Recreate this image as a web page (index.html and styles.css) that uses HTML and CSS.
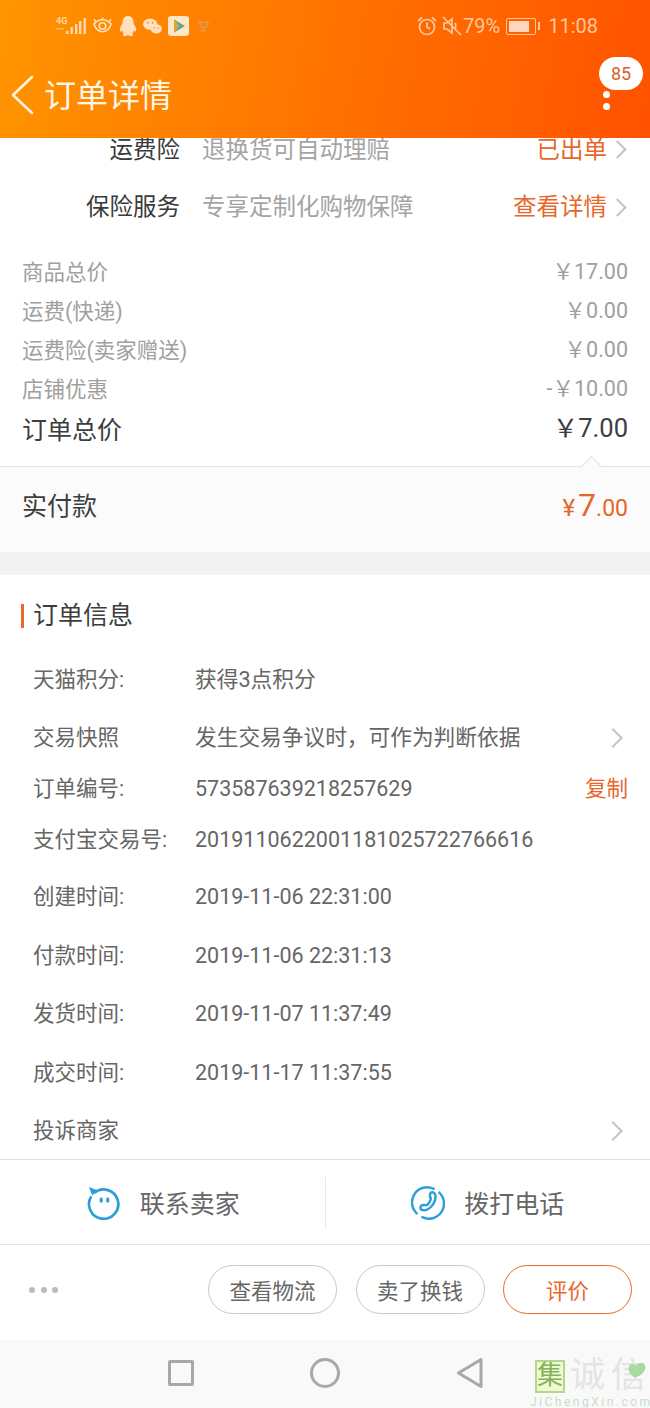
FILE: index.html
```html
<!DOCTYPE html>
<html lang="zh-CN">
<head>
    <meta charset="UTF-8">
    <meta name="viewport" content="width=device-width, initial-scale=1.0">
    <title>订单详情</title>
    <link rel="stylesheet" href="styles.css">
</head>
<body>
<div class="screen">
    <header class="top">
        <div class="status">
            <div class="status-left">
                <svg class="ic-signal" width="30" height="20" viewBox="0 0 30 20">
                    <text x="0" y="8" class="net">4G</text>
                    <rect x="0" y="12" width="8" height="1.500" opacity=".5"/>
                    <rect x="10" y="15" width="2.400" height="3"/><rect x="14.500" y="11" width="2.400" height="7"/><rect x="19" y="8" width="2.400" height="10"/><rect x="23" y="5" width="2.400" height="13"/><rect x="27.500" y="2" width="2.400" height="16"/>
                </svg>
                <svg width="21" height="18" viewBox="0 0 22 18" fill="none" stroke="#ffe2bd" stroke-width="1.700">
                    <path d="M2 7c5-6 13-6 18 0-2 6-5 8-9 8s-7-2-9-8z"/><circle cx="11" cy="9" r="3.400"/><path d="M2 2l2 2M20 2l-2 2M11 0v2"/>
                </svg>
                <svg width="18" height="21" viewBox="0 0 18 21" fill="#ffe2bd">
                    <path d="M9 0c4 0 5.500 3 5.500 6.500 0 1 .5 1.500 1.500 3.500 1.500 3 1.500 5.500.5 5.500-.5 0-1-.5-1.500-1.500-.5 2-1 2.800-2 3.500 1.500.5 1.500 2.500-1 2.500-1.500 0-2.500-.5-3-1-.5.5-1.500 1-3 1-2.500 0-2.500-2-1-2.500-1-.7-1.500-1.500-2-3.500-.5 1-1 1.500-1.500 1.500-1 0-1-2.500.5-5.500 1-2 1.500-2.500 1.500-3.500C3.500 3 5 0 9 0z"/>
                </svg>
                <svg width="19" height="17" viewBox="0 0 20 18" fill="#ffe2bd">
                    <ellipse cx="7.500" cy="6.500" rx="7.500" ry="6"/><ellipse cx="14" cy="11.500" rx="6" ry="5"/>
                    <circle cx="5" cy="5" r="1" fill="#ff8c00"/><circle cx="10" cy="5" r="1" fill="#ff8c00"/><circle cx="12" cy="10.500" r=".8" fill="#ff8c00"/><circle cx="16" cy="10.500" r=".8" fill="#ff8c00"/>
                </svg>
                <svg width="21" height="20" viewBox="0 0 21 20">
                    <rect width="21" height="20" rx="3" fill="#ffe7c4"/><path d="M6 3.500l11 6.500-11 6.500z" fill="#4fa9a0"/><path d="M6 3.500l5.500 6.500L6 16.500z" fill="#e9a52e"/>
                </svg>
                <svg class="ic-tiny" width="15" height="11" viewBox="0 0 13 10" fill="none" stroke="#d9a25c" stroke-width="1.200">
                    <path d="M1 1h11M3 1c0 4 2 5 3.500 5S10 5 10 1M6.500 6v3M4 9h5"/>
                </svg>
            </div>
            <div class="status-right">
                <svg width="20" height="20" viewBox="0 0 20 20" fill="none" stroke="#ffc89b" stroke-width="1.700">
                    <circle cx="10" cy="11" r="7.500"/><path d="M10 6.500V11l3 2M1 5l4-3.500M19 5l-4-3.500"/>
                </svg>
                <svg width="20" height="20" viewBox="0 0 20 20" fill="none" stroke="#ffc89b" stroke-width="1.700">
                    <path d="M2 7v6h3l5 4V3L5 7zM13 7c1 1 1 5 0 6M1 1l18 18"/>
                </svg>
                <span class="status-text pct">79%</span>
                <div class="battery"><span class="battery-fill"></span></div>
                <span class="battery-tip"></span>
                <span class="status-text clock">11:08</span>
            </div>
        </div>
        <div class="nav">
            <svg class="back" width="24" height="40" viewBox="0 0 24 40" fill="none" stroke="#fff4e0" stroke-width="2.600" stroke-linecap="round" stroke-linejoin="round">
                <path d="M21 2L2 20l19 18"/>
            </svg>
            <h1 class="nav-title">订单详情</h1>
            <div class="more"><i></i><i></i></div>
            <span class="badge">85</span>
        </div>
    </header>

    <main class="content">
        <div class="service-wrap">
            <div class="service">
                <span class="service-name">运费险</span>
                <span class="service-desc">退换货可自动理赔</span>
                <span class="service-state">已出单</span>
                <span class="chev chev-sm"></span>
            </div>
            <div class="service">
                <span class="service-name">保险服务</span>
                <span class="service-desc">专享定制化购物保障</span>
                <span class="service-state">查看详情</span>
                <span class="chev chev-sm"></span>
            </div>
        </div>

        <section class="prices">
            <div class="price-row"><span>商品总价</span><span class="amount">￥17.00</span></div>
            <div class="price-row"><span>运费(快递)</span><span class="amount">￥0.00</span></div>
            <div class="price-row"><span>运费险(卖家赠送)</span><span class="amount">￥0.00</span></div>
            <div class="price-row"><span>店铺优惠</span><span class="amount">-￥10.00</span></div>
            <div class="price-row total"><span>订单总价</span><span class="amount">￥7.00</span></div>
        </section>

        <section class="paid">
            <span class="notch"></span>
            <span class="paid-label">实付款</span>
            <span class="paid-sum"><small class="yen">¥</small><b>7</b><small>.00</small></span>
        </section>

        <section class="info">
            <h2 class="info-title">订单信息</h2>
            <div class="info-row r1"><span class="k">天猫积分:</span><span class="v">获得3点积分</span></div>
            <div class="info-row r2"><span class="k">交易快照</span><span class="v">发生交易争议时，可作为判断依据</span><span class="chev"></span></div>
            <div class="info-row r3"><span class="k">订单编号:</span><span class="v">573587639218257629</span><span class="copy">复制</span></div>
            <div class="info-row r4"><span class="k">支付宝交易号:</span><span class="v">2019110622001181025722766616</span></div>
            <div class="info-row"><span class="k">创建时间:</span><span class="v">2019-11-06 22:31:00</span></div>
            <div class="info-row"><span class="k">付款时间:</span><span class="v">2019-11-06 22:31:13</span></div>
            <div class="info-row"><span class="k">发货时间:</span><span class="v">2019-11-07 11:37:49</span></div>
            <div class="info-row"><span class="k">成交时间:</span><span class="v">2019-11-17 11:37:55</span></div>
            <div class="info-row"><span class="k">投诉商家</span><span class="v"></span><span class="chev"></span></div>
        </section>
    </main>

    <section class="contact">
        <div class="contact-item">
            <svg width="34" height="34" viewBox="0 0 36 36" fill="none" stroke="#2a9fd8" stroke-width="2.800">
                <path d="M7.500 7.500A15.500 15.500 0 1 1 4.500 11"/>
                <path d="M2 1l9 3.500-5.500 5.500z" fill="#2a9fd8" stroke="none"/>
                <ellipse cx="15" cy="15" rx="1.700" ry="3" fill="#2a9fd8" stroke="none"/>
                <ellipse cx="22" cy="15" rx="1.700" ry="3" fill="#2a9fd8" stroke="none"/>
            </svg>
            <span>联系卖家</span>
        </div>
        <div class="contact-item">
            <svg width="34" height="34" viewBox="0 0 36 36" fill="none" stroke="#2a9fd8" stroke-width="2.600" stroke-linecap="round">
                <path d="M6 29A16 16 0 0 1 24 3M30 7a16 16 0 0 1-18 26"/>
                <path d="M21 7c3-1 5 1 5 4 0 6-4 12-9 14-3 1-7 1-7-2 0-2 2-3 4-3 1 0 2 1 3 0 2-1 4-5 4-7 0-1-1-1-1-2 0-2 0-3 1-4z"/>
            </svg>
            <span>拨打电话</span>
        </div>
    </section>

    <section class="actions">
        <div class="dots"><i></i><i></i><i></i></div>
        <button class="btn">查看物流</button>
        <button class="btn">卖了换钱</button>
        <button class="btn btn-main">评价</button>
    </section>

    <footer class="sysnav">
        <span class="sys-square"></span>
        <span class="sys-circle"></span>
        <svg width="28" height="32" viewBox="0 0 28 32" fill="none" stroke="#a8a8a8" stroke-width="3" stroke-linejoin="round">
            <path d="M25 2.500v27L2.500 16z"/>
        </svg>
    </footer>

    <div class="mark">
        <div class="mark-top">
            <span class="mark-box">集</span>
            <span class="mark-cn">诚信</span>
            <svg class="mark-leaf" width="24" height="30" viewBox="0 0 24 30">
                <path d="M10 18C3 13 2 8 5 5c2-2 5-1 6 1 1-3 5-4 8-2 3 3 2 9-9 14z" fill="#a5dca0"/>
                <path d="M10 18C7 22 4 26 1 28" fill="none" stroke="#dfe8df" stroke-width="1.500"/>
            </svg>
        </div>
        <div class="mark-url">JiChengXin.com</div>
    </div>
</div>
</body>
</html>
```

FILE: styles.css
```css
* {
    box-sizing: border-box;
}

html, body {
    margin: 0;
    padding: 0;
}

body {
    font-family: Roboto, "Noto Sans CJK SC", sans-serif;
    color: #666;
    background: #fff;
}

.screen {
    position: relative;
    width: 650px;
    height: 1408px;
    overflow: hidden;
    display: flex;
    flex-direction: column;
    line-height: 32px;
}

/* header */
.top {
    position: relative;
    z-index: 1;
    height: 138px;
    flex: none;
    background: linear-gradient(100deg, #ff9400 0%, #ff7300 50%, #ff5200 100%);
}

.status {
    height: 52px;
    display: flex;
    justify-content: space-between;
    align-items: center;
    padding: 0 52px 0 56px;
}

.status-left {
    display: flex;
    align-items: center;
    gap: 6px;
}

.ic-signal {
    fill: #ffd9a8;
}

.ic-tiny {
    margin-left: 1px;
}

.net {
    font-size: 9px;
    font-weight: 700;
}

.status-right {
    display: flex;
    align-items: center;
}

.status-right svg {
    margin-right: 5px;
}

.status-right svg + svg {
    margin-right: 1px;
}

.status-text {
    color: #ffc89b;
    font-size: 20px;
}

.pct {
    margin-right: 6px;
}

.battery {
    width: 30px;
    height: 17px;
    border: 1px solid #ffc89b;
    border-radius: 2px;
    padding: 2px;
}

.battery-fill {
    display: block;
    width: 20px;
    height: 11px;
    background: #ffd6bd;
}

.battery-tip {
    width: 2px;
    height: 8px;
    margin: 0 8px 0 2px;
    background: #ffc89b;
}

.nav {
    position: relative;
    height: 86px;
    display: flex;
    align-items: center;
    padding: 0 0 0 11px;
}

.nav-title {
    margin: 2px 0 0 9px;
    font-size: 32px;
    font-weight: 400;
    color: #fff6e6;
    line-height: 1;
}

.more {
    position: absolute;
    left: 603px;
    top: 39px;
    display: flex;
    flex-direction: column;
    gap: 5px;
}

.more i {
    width: 7px;
    height: 7px;
    border-radius: 50%;
    background: #fff;
}

.badge {
    position: absolute;
    left: 599px;
    top: 5px;
    width: 44px;
    height: 33px;
    border-radius: 17px;
    background: #fff;
    color: #d8602c;
    font-size: 18px;
    line-height: 33px;
    text-align: center;
}

/* order scroll area */
.content {
    flex: none;
    height: 1022px;
    overflow: hidden;
    border-bottom: 1px solid #dedede;
}

.service-wrap {
    margin-top: -17px;
}

.service {
    height: 57.500px;
    display: flex;
    align-items: center;
    padding-right: 24px;
    font-size: 23.500px;
}

.service-name {
    width: 180px;
    text-align: right;
    color: #3a3a3a;
}

.service-desc {
    flex: 1;
    margin-left: 22px;
    color: #a4a4a4;
}

.service-state {
    color: #e8672a;
}

.chev {
    width: 13px;
    height: 13px;
    margin-left: auto;
    margin-right: 5px;
    border-top: 2px solid #c4c4c4;
    border-right: 2px solid #c4c4c4;
    transform: rotate(45deg);
}

.chev-sm {
    margin-left: 4px;
    margin-right: 2px;
}

.prices {
    margin-top: 18px;
    padding: 0 22px;
}

.price-row {
    height: 38.800px;
    display: flex;
    justify-content: space-between;
    align-items: center;
    font-size: 21.500px;
    color: #a0a0a0;
}

.amount {
    margin-bottom: 2px;
}

.price-row.total {
    height: 43px;
    font-size: 25.500px;
    color: #3d3d3d;
}

.price-row.total span:first-child {
    font-size: 25px;
}

.price-row.total .amount {
    margin-bottom: 5px;
}

.paid {
    position: relative;
    height: 86px;
    margin-top: 14px;
    padding: 0 22px 5px;
    display: flex;
    justify-content: space-between;
    align-items: center;
    background: #fbfbfb;
    border-top: 1px solid #e4e4e4;
}

.notch {
    position: absolute;
    left: 584px;
    top: -8px;
    width: 15px;
    height: 15px;
    background: #fbfbfb;
    border-top: 1px solid #e0e0e0;
    border-left: 1px solid #e0e0e0;
    transform: rotate(45deg);
}

.paid-label {
    font-size: 25px;
    color: #3d3d3d;
}

.paid-sum {
    color: #e4662a;
    display: flex;
    align-items: baseline;
}

.paid-sum small {
    font-size: 23px;
}

.paid-sum .yen {
    font-size: 24px;
    margin-right: 3px;
}

.paid-sum b {
    font-size: 32px;
    font-weight: 400;
}

.info {
    margin-top: 23px;
    position: relative;
    padding-top: 22px;
}

.info::before {
    content: "";
    position: absolute;
    left: -1px;
    right: -1px;
    top: -23px;
    height: 23px;
    background: #f2f2f2;
}

.info-title {
    margin: 7px 0 0 21px;
    padding-left: 9px;
    border-left: 3px solid #e8672a;
    font-size: 25px;
    font-weight: 400;
    line-height: 24px;
    color: #3d3d3d;
}

.info-row {
    height: 58.500px;
    display: flex;
    align-items: center;
    padding: 0 22px 0 33px;
    font-size: 21.500px;
    color: #666;
}

.info-row.r1 {
    height: 57.500px;
    margin-top: 23.500px;
}

.info-row.r2 {
    height: 58px;
}

.info-row.r3 {
    height: 44px;
}

.info-row.r4 {
    height: 57px;
}

.r1 .v, .r2 .v {
    font-size: 21.700px;
}

.k {
    width: 162px;
    flex: none;
}

.v {
    flex: 1;
    white-space: nowrap;
}

.info-row .chev {
    margin-right: 8px;
    width: 14px;
    height: 14px;
}

.copy {
    color: #e8672a;
}

/* bottom bars */
.contact {
    height: 85px;
    flex: none;
    display: flex;
    align-items: center;
    padding-top: 1px;
    border-bottom: 1px solid #e2e2e2;
}

.contact-item {
    width: 325px;
    height: 52px;
    display: flex;
    align-items: center;
    justify-content: center;
    gap: 19px;
    font-size: 25px;
    color: #666;
}

.contact-item span {
    margin-top: 5px;
}

.contact-item:first-child {
    width: 326px;
    padding-left: 2px;
    border-right: 1px solid #e8e8e8;
}

.actions {
    height: 95px;
    flex: none;
    display: flex;
    align-items: center;
    justify-content: flex-end;
    gap: 18.500px;
    padding: 0 18px 6px 0;
}

.dots {
    margin-right: auto;
    margin-left: 29px;
    display: flex;
    gap: 5.500px;
}

.dots i {
    width: 6px;
    height: 6px;
    border-radius: 50%;
    background: #bbb;
}

.btn {
    width: 129px;
    height: 49px;
    border: 1px solid #c8c8c8;
    border-radius: 25px;
    background: #fff;
    padding: 0;
    font-family: inherit;
    font-size: 21.500px;
    color: #666;
}

.btn-main {
    border-color: #e8672a;
    color: #e8672a;
}

.sysnav {
    flex: 1;
    background: #f9f9f9;
    display: flex;
    align-items: center;
    padding: 0 0 2px 168px;
    gap: 116px;
}

.sys-square {
    width: 26px;
    height: 26px;
    border: 3px solid #a8a8a8;
    border-radius: 2px;
}

.sys-circle {
    width: 30px;
    height: 30px;
    border: 3px solid #a8a8a8;
    border-radius: 50%;
}

/* site watermark in the corner */
.mark {
    position: absolute;
    left: 530px;
    top: 1359px;
    width: 120px;
    line-height: 1;
}

.mark-top {
    position: relative;
    display: flex;
    align-items: center;
    gap: 5px;
}

.mark-box {
    width: 33px;
    height: 33px;
    margin-left: 5px;
    border: 2px solid #b5d68c;
    background: #eefbd0;
    color: #86b25e;
    font-size: 26px;
    line-height: 27px;
    text-align: center;
}

.mark-cn {
    font-size: 35px;
    line-height: 34px;
    letter-spacing: 6px;
    color: #e4e4e4;
    white-space: nowrap;
}

.mark-leaf {
    position: absolute;
    left: 95px;
    top: 1px;
}

.mark-url {
    font-size: 12px;
    letter-spacing: 2.500px;
    line-height: 14px;
    margin-top: 2px;
    color: #c9dcc9;
    white-space: nowrap;
}
```
